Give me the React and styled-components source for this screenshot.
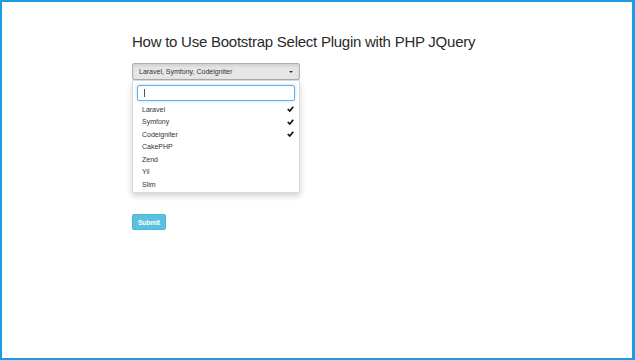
import React, { useState } from "react";
import styled, { createGlobalStyle } from "styled-components";

const GlobalStyle = createGlobalStyle`
  html, body {
    margin: 0;
    padding: 0;
    background: #fff;
  }
  body {
    font-family: "Liberation Sans", Arial, sans-serif;
    color: #333;
  }
`;

const Frame = styled.div`
  width: 635px;
  height: 360px;
  box-sizing: border-box;
  border-style: solid;
  border-color: #1c9de2;
  border-width: 2px 3px 2px 2px;
  padding: 31px 0 0 130px;
`;

const Title = styled.h2`
  margin: 0 0 13px 0;
  font-size: 15px;
  letter-spacing: -0.25px;
  font-weight: 400;
  color: #2a2a2a;
  line-height: 17px;
`;

const Picker = styled.div`
  width: 168px;
  display: flex;
  flex-direction: column;
`;

const Toggle = styled.div`
  height: 17px;
  box-sizing: border-box;
  border: 1px solid #adadad;
  border-radius: 2px;
  background: #e6e6e6;
  box-shadow: inset 0 2px 3px rgba(0, 0, 0, 0.1);
  display: flex;
  align-items: center;
  justify-content: space-between;
  padding: 0 6px 0 6px;
  font-size: 7px;
  color: #333;
`;

const Caret = styled.span`
  width: 0;
  height: 0;
  border-left: 2px solid transparent;
  border-right: 2px solid transparent;
  border-top: 2px solid #333;
`;

const Menu = styled.div`
  border: 1px solid rgba(0, 0, 0, 0.15);
  border-radius: 2px;
  background: #fff;
  box-shadow: 0 3px 6px rgba(0, 0, 0, 0.18);
  padding: 2px 0 1.5px;
`;

const SearchBox = styled.div`
  padding: 2px 4px 2px 4px;
`;

const SearchInput = styled.div`
  height: 16px;
  box-sizing: border-box;
  border: 1px solid #66afe9;
  border-radius: 2px;
  box-shadow: 0 0 3px rgba(102, 175, 233, 0.5);
  display: flex;
  align-items: center;
  padding-left: 6px;
`;

const Cursor = styled.span`
  width: 1px;
  height: 8px;
  background: #555;
`;

const Option = styled.div`
  height: 12.5px;
  display: flex;
  align-items: center;
  justify-content: space-between;
  padding: 0 5px 0 9px;
  font-size: 7px;
  color: #333;
`;

const Check = styled.svg`
  width: 7px;
  height: 6px;
`;

const SubmitButton = styled.button`
  margin-top: 21px;
  width: 34px;
  height: 16px;
  border: 1px solid #46b8da;
  border-radius: 2px;
  background: #5bc0de;
  color: #fff;
  font-family: "Liberation Sans", Arial, sans-serif;
  font-size: 6.5px;
  font-weight: 700;
  padding: 0;
`;

const frameworks = ["Laravel", "Symfony", "Codeigniter", "CakePHP", "Zend", "Yii", "Slim"];

const App = () => {
  const [selected] = useState(["Laravel", "Symfony", "Codeigniter"]);

  return (
    <>
      <GlobalStyle />
      <Frame>
        <Title>How to Use Bootstrap Select Plugin with PHP JQuery</Title>
        <Picker>
          <Toggle>
            <span>{selected.join(", ")}</span>
            <Caret />
          </Toggle>
          <Menu>
            <SearchBox>
              <SearchInput>
                <Cursor />
              </SearchInput>
            </SearchBox>
            {frameworks.map((name) => (
              <Option key={name}>
                <span>{name}</span>
                {selected.includes(name) && (
                  <Check viewBox="0 0 14 12">
                    <path d="M1.5 6 L5.5 10 L12.5 1.5" fill="none" stroke="#111" strokeWidth="3.4" />
                  </Check>
                )}
              </Option>
            ))}
          </Menu>
        </Picker>
        <SubmitButton>Submit</SubmitButton>
      </Frame>
    </>
  );
};

export default App;
